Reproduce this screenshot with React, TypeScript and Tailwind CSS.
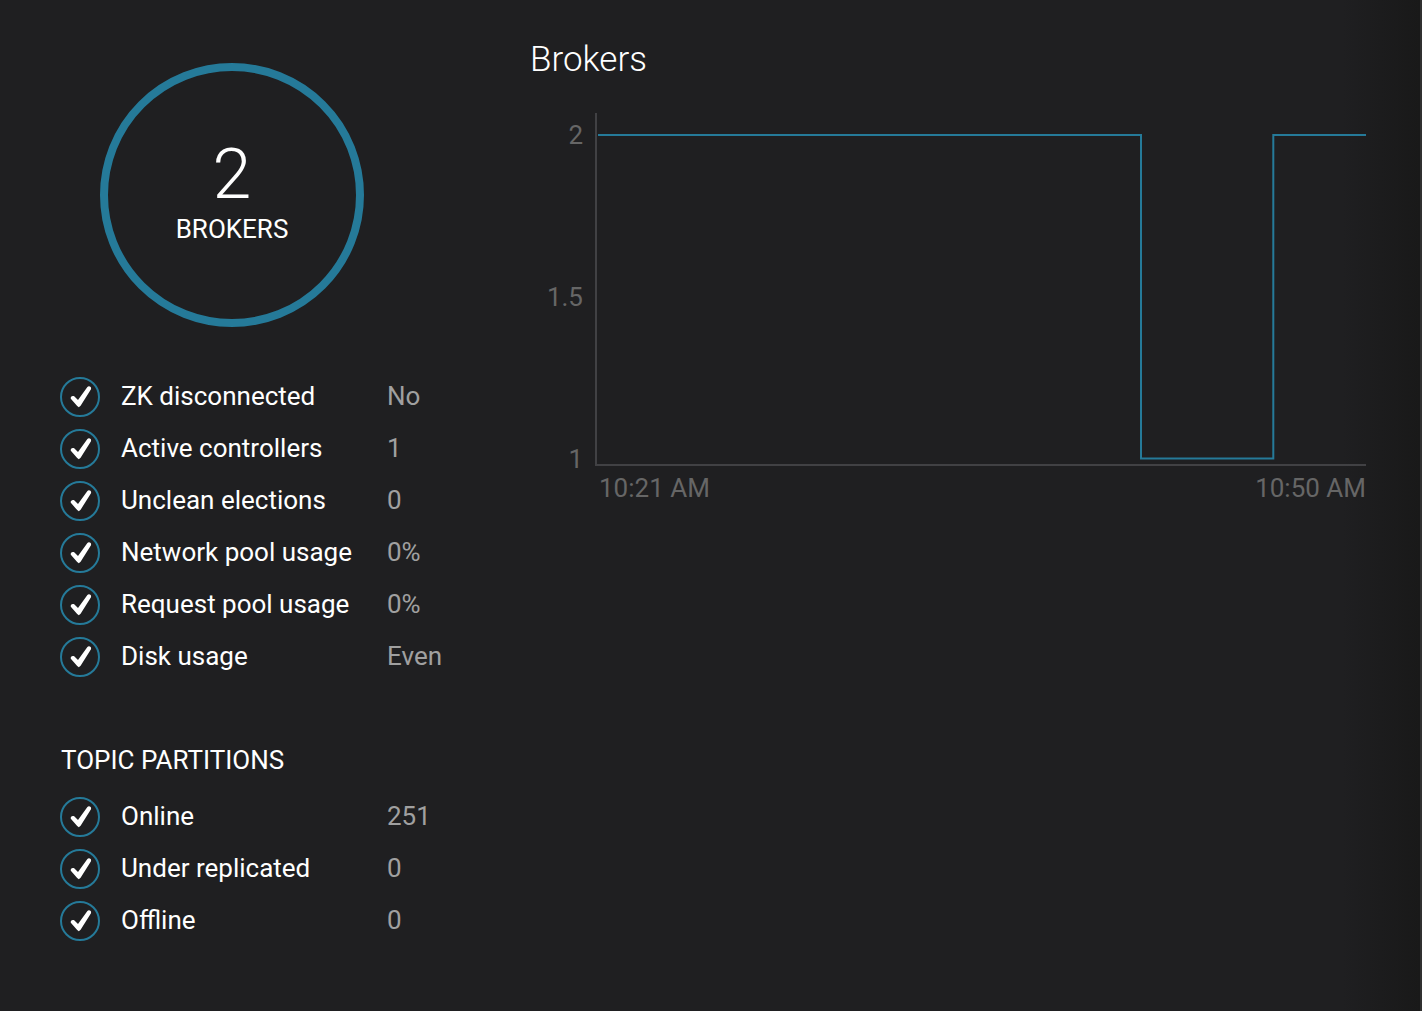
type Stat = { label: string; value: string };

const health: Stat[] = [
  { label: "ZK disconnected", value: "No" },
  { label: "Active controllers", value: "1" },
  { label: "Unclean elections", value: "0" },
  { label: "Network pool usage", value: "0%" },
  { label: "Request pool usage", value: "0%" },
  { label: "Disk usage", value: "Even" },
];

const partitions: Stat[] = [
  { label: "Online", value: "251" },
  { label: "Under replicated", value: "0" },
  { label: "Offline", value: "0" },
];

function CheckIcon() {
  return (
    <svg viewBox="0 0 40 40" className="block size-10" role="img" aria-label="OK">
      <circle cx="20" cy="20" r="19" fill="none" stroke="#257a99" strokeWidth="2" />
      <path
        d="M10.8 21.8C10.2 19.9 12.2 18.2 14.2 19.3L18 22.9L27.4 9.9C28.8 8.4 31.8 9.6 31 12.2L20.6 28.8L18.8 30.2L17.2 29.1Z"
        fill="#fff"
      />
    </svg>
  );
}

function StatTable({ rows, label }: { rows: Stat[]; label: string }) {
  return (
    <table aria-label={label} className="w-full table-fixed text-left">
      <tbody>
        {rows.map((row) => (
          <tr key={row.label} className="h-13">
            <td className="w-[61px] p-0">
              <CheckIcon />
            </td>
            <th scope="row" className="w-[266px] p-0 pb-0.5 font-normal whitespace-nowrap">
              {row.label}
            </th>
            <td className="p-0 pb-0.5 text-[#a0a0a0]">{row.value}</td>
          </tr>
        ))}
      </tbody>
    </table>
  );
}

function BrokersChart() {
  return (
    <section className="min-w-0 flex-1 pt-9">
      <h1 className="pl-0.5 text-[35px] leading-12 font-light">Brokers</h1>
      <div className="mt-[29px] flex text-[#666]">
        <div className="mt-1 flex h-[360px] w-[67px] flex-col justify-between pr-3 text-right leading-9">
          <span>2</span>
          <span>1.5</span>
          <span>1</span>
        </div>
        <div className="min-w-0 flex-1">
          <svg
            viewBox="0 0 771 353"
            preserveAspectRatio="none"
            className="block h-[353px] w-full"
            role="img"
            aria-label="Broker count from 10:21 AM to 10:50 AM"
          >
            <path
              d="M1 0V352H771"
              fill="none"
              stroke="#414144"
              strokeWidth="2"
              vectorEffect="non-scaling-stroke"
            />
            <path
              d="M3 22H546V345.5H678.3V22H771"
              fill="none"
              stroke="#257a99"
              strokeWidth="2"
              vectorEffect="non-scaling-stroke"
            />
          </svg>
          <div className="flex justify-between pt-1 pl-1 leading-9">
            <span>10:21 AM</span>
            <span>10:50 AM</span>
          </div>
        </div>
      </div>
    </section>
  );
}

export default function App() {
  return (
    <div className="flex min-h-screen bg-[#1f1f21] font-['Roboto',sans-serif] text-[26px] text-white">
      <main className="z-10 -mr-20 flex min-w-0 flex-1 items-start pr-14 pl-15">
        <aside className="w-[468px] shrink-0 pt-[63px]">
          <div className="ml-10 flex size-[264px] flex-col items-center justify-center rounded-full border-8 border-[#257a99] pb-1">
            <span className="text-[70px] leading-[70px] font-light">2</span>
            <span className="pt-0.5 leading-9">BROKERS</span>
          </div>
          <div className="pt-11">
            <StatTable rows={health} label="Cluster health" />
          </div>
          <h2 className="pt-[57px] pb-[11px] pl-px leading-10">TOPIC PARTITIONS</h2>
          <StatTable rows={partitions} label="Topic partitions" />
        </aside>
        <BrokersChart />
      </main>
      <div className="w-20 shrink-0 border-r-2 border-[#303030] bg-linear-to-r from-transparent to-[#191919]" />
    </div>
  );
}
